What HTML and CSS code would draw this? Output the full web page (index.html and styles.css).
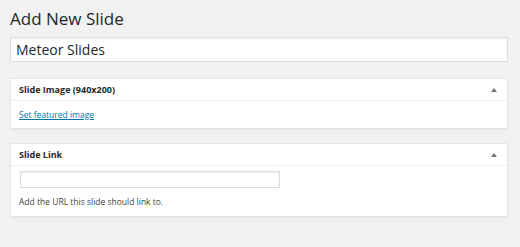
FILE: index.html
```html
<!DOCTYPE html>
<html lang="en">
<head>
    <meta charset="UTF-8">
    <meta name="viewport" content="width=device-width, initial-scale=1.0">
    <title>Add New Slide</title>
    <link rel="stylesheet" href="styles.css">
</head>
<body>
    <div class="wrap">
        <h1 class="page-title">Add New Slide</h1>
        <input class="title-input" type="text" value="Meteor Slides">

        <!-- slide image box -->
        <div class="postbox">
            <div class="postbox-head">
                <span>Slide Image (940x200)</span>
                <span class="toggle"></span>
            </div>
            <div class="postbox-body image-body">
                <a href="#">Set featured image</a>
            </div>
        </div>

        <!-- slide link box -->
        <div class="postbox">
            <div class="postbox-head">
                <span>Slide Link</span>
                <span class="toggle"></span>
            </div>
            <div class="postbox-body link-body">
                <input class="link-input" type="text">
                <p class="help">Add the URL this slide should link to.</p>
            </div>
        </div>
    </div>
</body>
</html>
```

FILE: styles.css
```css
body { font-family: "Open Sans", Arial, sans-serif; margin: 0; padding: 0; background-color: #f1f1f1; color: #23282d; }
.wrap { padding: 0 12px 0 10px; }
.page-title { font-size: 17px; font-weight: 400; margin: 0; height: 37px; line-height: 38px; }
.title-input { display: block; box-sizing: border-box; width: 100%; height: 25px; margin: 0 0 16px; padding: 0 5px; border: 1px solid #ddd; box-shadow: inset 0 1px 2px rgba(0,0,0,0.07); font-family: inherit; font-size: 14px; color: #23282d; background: #fff; outline: none; }
.postbox { background: #fff; border: 1px solid #e5e5e5; box-shadow: 0 1px 1px rgba(0,0,0,0.04); margin-bottom: 14px; }
.postbox-head { display: flex; justify-content: space-between; align-items: center; height: 21px; padding: 0 8px 0 8px; border-bottom: 1px solid #eee; font-size: 9px; font-weight: 700; }
.toggle { width: 0; height: 0; border-left: 3px solid transparent; border-right: 3px solid transparent; border-bottom: 4px solid #72777c; margin-right: 2px; }
.postbox-body { padding: 0 8px; font-size: 8.5px; }
.image-body { height: 27px; display: flex; align-items: center; }
.image-body a { color: #0073aa; }
.link-body { padding-top: 5px; padding-bottom: 8px; }
.link-input { display: block; box-sizing: border-box; width: 260px; height: 17px; margin: 0 0 0 1px; border: 1px solid #ddd; box-shadow: inset 0 1px 2px rgba(0,0,0,0.07); outline: none; }
.help { margin: 8px 0 0; line-height: 12px; color: #444; }
```
